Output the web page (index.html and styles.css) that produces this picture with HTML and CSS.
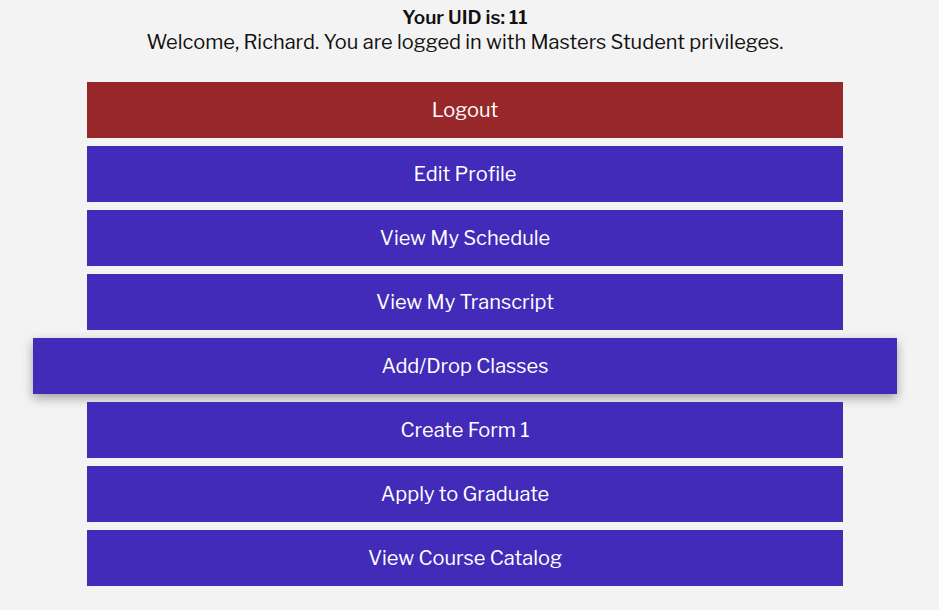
FILE: index.html
```html
<!DOCTYPE html>
<html lang="en">
<head>
  <meta charset="UTF-8">
  <meta name="viewport" content="width=device-width, initial-scale=1.0">
  <link rel="stylesheet" href="styles.css">
</head>
<body>

<!-- header -->
<div class="welcome">
  <div class="uid">Your UID is: 11</div>
  <div class="msg">Welcome, Richard. You are logged in with Masters Student privileges.</div>
</div>

<!-- menu -->
<div class="menu">
  <a class="btn logout" href="#">Logout</a>
  <a class="btn" href="#">Edit Profile</a>
  <a class="btn" href="#">View My Schedule</a>
  <a class="btn" href="#">View My Transcript</a>
  <a class="btn hover" href="#">Add/Drop Classes</a>
  <a class="btn" href="#">Create Form 1</a>
  <a class="btn" href="#">Apply to Graduate</a>
  <a class="btn" href="#">View Course Catalog</a>
</div>

</body>
</html>
```

FILE: styles.css
```css
html, body {
  margin: 0;
  padding: 0;
  background: #f3f3f3;
}

body {
  font-family: "Libre Franklin", Roboto, "Liberation Sans", sans-serif;
  color: #111;
  padding-right: 9px;
}

.welcome {
  text-align: center;
  padding-top: 5px;
  font-size: 20px;
  line-height: 25px;
}

.uid {
  font-weight: 600;
  font-size: 19px;
}

.menu {
  width: 756px;
  margin: 27px auto 0;
  display: flex;
  flex-direction: column;
  gap: 8px;
}

.btn {
  display: flex;
  align-items: center;
  justify-content: center;
  height: 56px;
  background: #412bb8;
  color: #fff;
  font-size: 20px;
  text-decoration: none;
  transition: all 0.2s ease;
}

.btn.logout {
  background: #982729;
}

.btn:hover,
.btn.hover {
  margin: 0 -54px;
  box-shadow: 0 4px 10px rgba(0,0,0,0.35);
}
```
